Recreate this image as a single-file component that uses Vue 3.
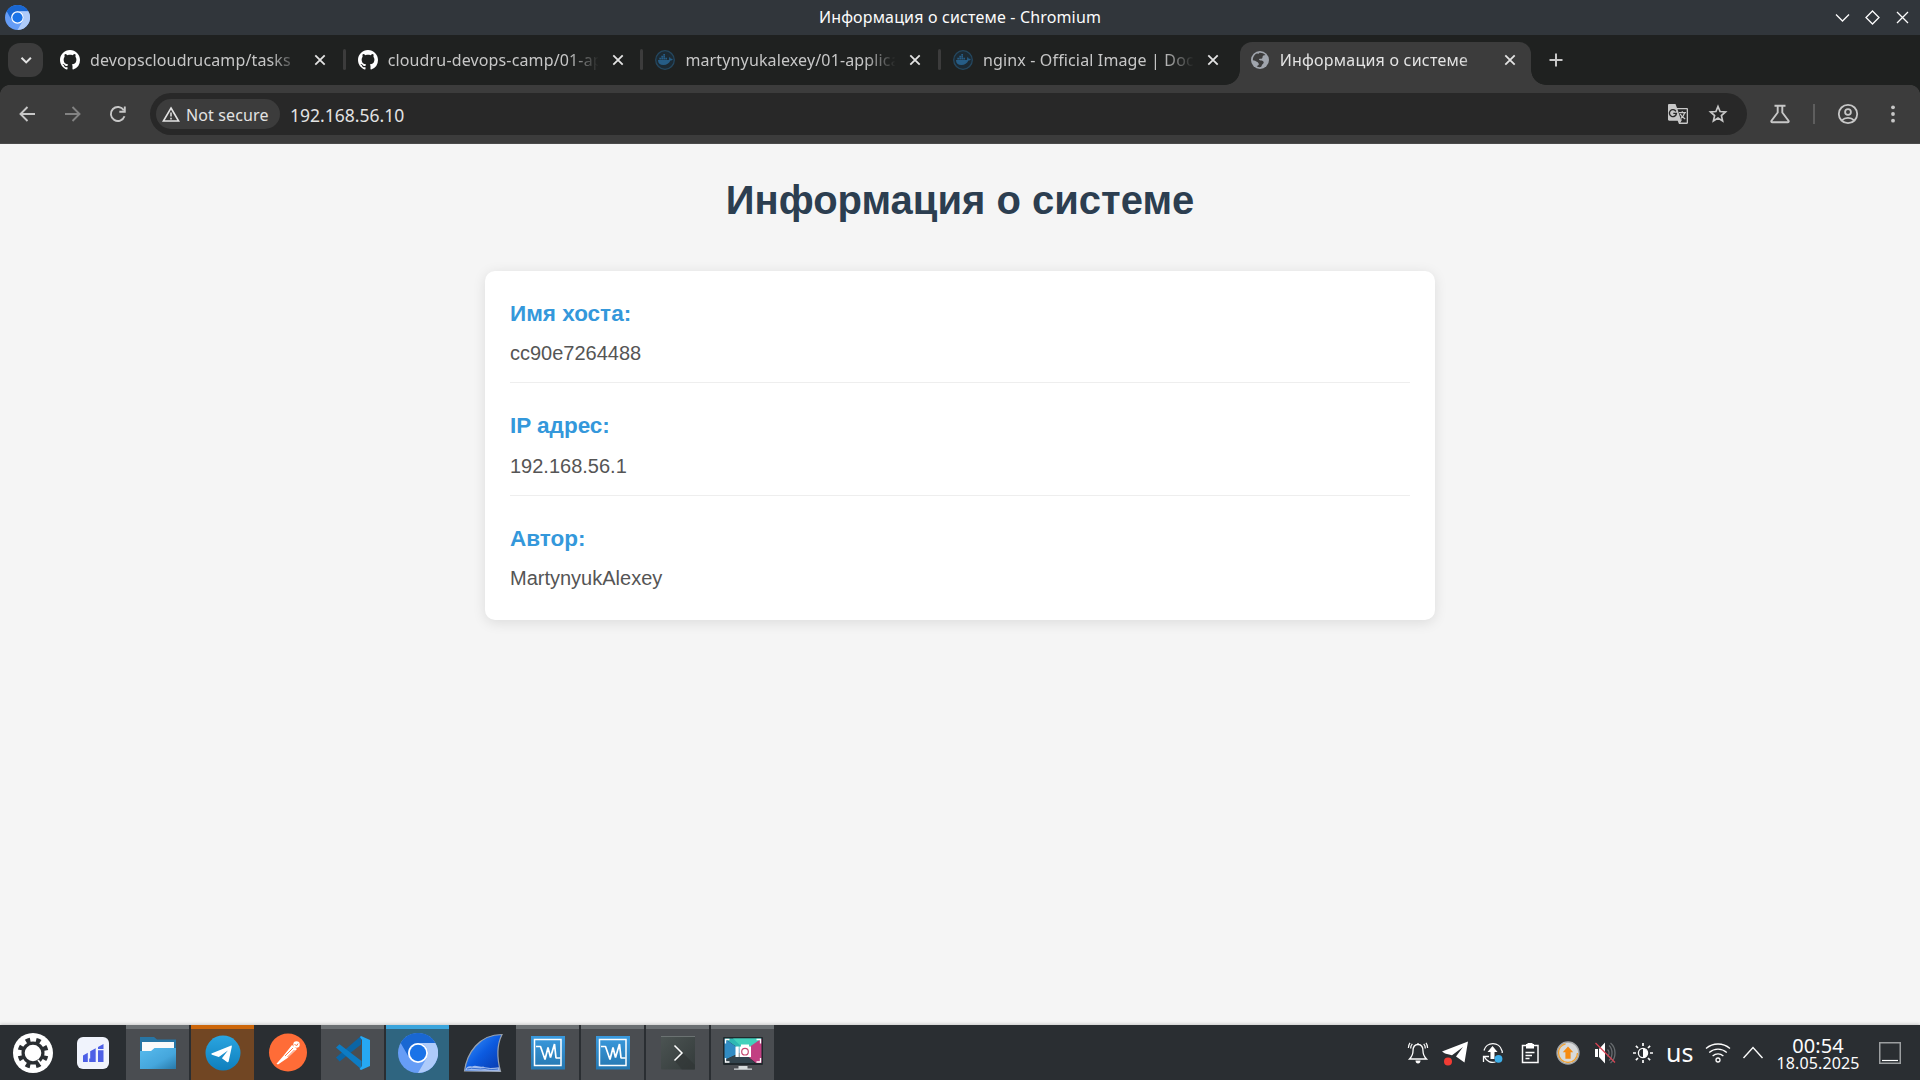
<script setup>
const tabs = [
  { title: 'devopscloudrucamp/tasks', icon: 'github' },
  { title: 'cloudru-devops-camp/01-ap', icon: 'github' },
  { title: 'martynyukalexey/01-applica', icon: 'docker' },
  { title: 'nginx - Official Image | Doc', icon: 'docker' },
  { title: 'Информация о системе', icon: 'globe', active: true },
]

const info = [
  { label: 'Имя хоста:', value: 'cc90e7264488' },
  { label: 'IP адрес:', value: '192.168.56.1' },
  { label: 'Автор:', value: 'MartynyukAlexey' },
]

const tasks = [
  { icon: 'folder', state: 'open' },
  { icon: 'telegram', state: 'attention' },
  { icon: 'postman', state: 'pinned' },
  { icon: 'code', state: 'open' },
  { icon: 'chromium', state: 'current' },
  { icon: 'shark', state: 'pinned' },
  { icon: 'machine', state: 'open' },
  { icon: 'machine', state: 'open' },
  { icon: 'terminal', state: 'open' },
  { icon: 'capture', state: 'open' },
]
</script>

<template>
  <div class="desktop">
    <svg class="defs" width="0" height="0">
      <defs>
        <symbol id="chromium" viewBox="0 0 48 48">
          <circle cx="24" cy="24" r="24" fill="#669df6" />
          <path fill="#1967d2" d="M24 12H44.8A24 24 0 0 0 3.2 12L13.6 30A12 12 0 0 1 24 12z" />
          <path fill="#aecbfa" d="M34.4 30L24 48A24 24 0 0 0 44.8 12H24A12 12 0 0 1 34.4 30z" />
          <circle cx="24" cy="24" r="12" fill="#fff" />
          <circle cx="24" cy="24" r="9.8" fill="#1a73e8" />
        </symbol>
        <linearGradient id="gFolder" x1="0" y1="0" x2="1" y2="1">
          <stop offset="0" stop-color="#57bbee" /><stop offset=".6" stop-color="#45a6dc" /><stop offset="1" stop-color="#2878a8" />
        </linearGradient>
        <linearGradient id="gTelegram" x1="0" y1="0" x2="0" y2="1">
          <stop offset="0" stop-color="#2aa5e0" /><stop offset="1" stop-color="#0f7fbd" />
        </linearGradient>
        <linearGradient id="gShark" x1="0" y1="0" x2="1" y2="1">
          <stop offset="0" stop-color="#3f9bff" /><stop offset=".5" stop-color="#0c5be0" /><stop offset="1" stop-color="#0836a8" />
        </linearGradient>
        <linearGradient id="gTerm" x1="0" y1="0" x2="1" y2="1">
          <stop offset="0" stop-color="#4c5453" /><stop offset="1" stop-color="#343b3b" />
        </linearGradient>
        <linearGradient id="gBox" x1="0" y1="0" x2="0" y2="1">
          <stop offset="0" stop-color="#3a9ade" /><stop offset="1" stop-color="#2577b0" />
        </linearGradient>
      </defs>
    </svg>

    <header class="titlebar">
      <svg class="app-icon" width="25" height="25"><use href="#chromium" /></svg>
      <span class="window-title">Информация о системе - Chromium</span>
      <div class="window-buttons">
        <svg width="30" height="35"><path d="M9 14.5l6.5 6.5 6.5-6.5" /></svg>
        <svg width="30" height="35"><path d="M15.5 11l6.5 6.5-6.5 6.5L9 17.500z" /></svg>
        <svg width="30" height="35"><path d="M10 12l11 11M21 12L10 23" /></svg>
      </div>
    </header>

    <nav class="tabstrip">
      <button class="tab-search">
        <svg width="14" height="14" viewBox="0 0 14 14"><path d="M2.500 4.700l4.700 4.700 4.700-4.700" /></svg>
      </button>
      <div v-for="(tab, i) in tabs" :key="i" class="tab" :class="{ active: tab.active }">
        <svg v-if="tab.icon === 'github'" class="favicon" viewBox="0 0 16 16">
          <path fill="#fff" d="M8 0C3.58 0 0 3.58 0 8c0 3.54 2.29 6.53 5.47 7.59.4.07.55-.17.55-.38 0-.19-.01-.82-.01-1.490-2.010.370-2.530-.490-2.690-.940-.090-.230-.480-.940-.820-1.130-.280-.150-.680-.520-.010-.530.630-.010 1.080.580 1.230.820.720 1.210 1.870.870 2.330.660.070-.520.280-.870.510-1.070-1.780-.200-3.640-.890-3.640-3.950 0-.870.310-1.590.820-2.150-.080-.200-.360-1.020.080-2.120 0 0 .670-.210 2.200.820.640-.180 1.320-.270 2-.270s1.360.090 2 .270c1.530-1.040 2.200-.820 2.200-.820.440 1.100.160 1.920.080 2.120.510.560.820 1.270.820 2.150 0 3.070-1.870 3.750-3.650 3.950.290.250.540.730.540 1.480 0 1.070-.010 1.930-.010 2.200 0 .210.150.460.550.380A8.010 8.010 0 0 0 16 8c0-4.420-3.580-8-8-8z" />
        </svg>
        <svg v-else-if="tab.icon === 'docker'" class="favicon" viewBox="0 0 20 20">
          <circle cx="10" cy="10" r="9.300" fill="#1c2a33" stroke="#24475f" stroke-width="1.300" />
          <path fill="#265d86" d="M3 10h10.700c.7-.6.500-1.600.200-2.200l.9-.600c.6.400 1 1 1 1.700.6-.1 1.300 0 1.900.300-.4 1-1.300 1.400-2.300 1.400C14 13.600 11.800 15 8.500 15 4.800 15 3 13.300 3 10zM4.300 7.800h1.700v1.700H4.300zM6.300 7.800H8v1.700H6.300zM8.300 7.800H10v1.700H8.300zM10.300 7.800H12v1.700h-1.700zM6.300 5.800H8v1.700H6.300zM8.300 5.800H10v1.700H8.300zM8.300 3.900H10v1.600H8.300z" />
        </svg>
        <svg v-else class="favicon" viewBox="0 0 20 20">
          <circle cx="10" cy="10" r="9" fill="#a0a5ad" />
          <path fill="#3c3c3c" d="M9.300 2.700c1.800-.3 4.600.4 6.100 2.400-.7.300-1.900.3-2.500.900-.8.800.1 2-1 2.500-1 .4-2-.2-2.700.6-.6.700.500 1.300 1.500 1.300 1.600 0 2.800.600 3 1.900.1 1.200-1.100 1.700-1.700 2.600-.4.700-.5 1.900-1.400 2.200-1.500.2-2.900-.2-3.900-.9.900-.3 1.900-.7 2.100-1.600.2-1-.6-1.800-1.400-2.500C6 10.900 4.300 10.500 2.800 10.200 2.600 7 4.500 4.200 7.200 3.200 7.600 4.300 9 4 9.300 2.700z" />
        </svg>
        <span class="tab-title">{{ tab.title }}</span>
        <svg class="tab-close" width="20" height="20"><path d="M5.300 5.300l9.400 9.400M14.700 5.300l-9.400 9.400" /></svg>
      </div>
      <svg class="new-tab" width="20" height="20"><path d="M10 3.500v13M3.500 10h13" /></svg>
    </nav>

    <div class="toolbar">
      <svg class="nav-icon back" viewBox="0 0 20 20"><path d="M17 10H3M9.500 3l-7 7 7 7" /></svg>
      <svg class="nav-icon forward" viewBox="0 0 20 20"><path d="M2 10h14M9.500 3l7 7-7 7" /></svg>
      <svg class="nav-icon reload" viewBox="0 0 20 20"><path d="M16.500 12.200A7 7 0 1 1 15.800 6.200M16.800 2.400V7.700H11.300" /></svg>
      <div class="omnibox">
        <div class="chip">
          <svg width="18" height="17" viewBox="0 0 18 17"><path d="M9 2L16.600 15H1.400z" fill="none" stroke="#e3e3e3" stroke-width="1.600" /><path d="M9 6.500v4M9 11.800v1.700" stroke="#e3e3e3" stroke-width="1.500" /></svg>
          <span>Not secure</span>
        </div>
        <span class="url">192.168.56.10</span>
        <svg class="translate" width="22" height="22" viewBox="0 0 22 22">
          <path fill="#c7c7c7" d="M2.200 1h6.300l1.500 4h9.800c.7 0 1.200.5 1.200 1.200v13.600c0 .7-.5 1.200-1.200 1.200H12l-1.300-3.200H2.200C1.500 17.800 1 17.300 1 16.600V2.200C1 1.500 1.500 1 2.200 1z" />
          <path fill="#282828" d="M10.500 6.300h9.200v13.300H13l1.200-1.900z" />
          <path fill="none" stroke="#282828" stroke-width="1.400" d="M8.900 8.300A3.500 3.500 0 1 0 9.400 10.400H6.300" />
          <path fill="none" stroke="#c7c7c7" stroke-width="1.300" d="M12 9.700h7M15.300 8.200v1.500M17.700 9.700c-.5 2.300-2 4.500-4 5.800M13.200 11c1 2 2.800 3.600 5 5M11.500 17.200l2.500 0-1.700 2.800" />
        </svg>
        <svg class="star" width="20" height="20" viewBox="0 0 20 20"><path d="M10 2.500l2.100 5 5.400.5-4.100 3.600 1.200 5.300-4.600-2.800-4.600 2.800 1.200-5.300L2.500 8l5.400-.5z" /></svg>
      </div>
      <svg class="flask" width="22" height="22" viewBox="0 0 22 22"><path d="M5.500 2.800h11M8.700 3v6.500L2.500 17.800c-.5.900-.1 1.500.8 1.500h15.400c.9 0 1.300-.6.800-1.500L13.300 9.500V3" /></svg>
      <span class="divider"></span>
      <svg class="profile" width="22" height="22" viewBox="0 0 22 22"><circle cx="11" cy="11" r="9.200" /><circle cx="11" cy="9" r="2.900" /><path d="M4.800 17.300c3.400-3.200 9-3.200 12.400 0" /></svg>
      <svg class="menu" width="6" height="22" viewBox="0 0 6 22"><circle cx="3" cy="4.300" r="1.900" /><circle cx="3" cy="11" r="1.900" /><circle cx="3" cy="17.700" r="1.900" /></svg>
    </div>

    <main class="page">
      <h1>Информация о системе</h1>
      <section class="card">
        <div v-for="item in info" :key="item.label" class="row">
          <div class="label">{{ item.label }}</div>
          <div class="value">{{ item.value }}</div>
        </div>
      </section>
    </main>

    <footer class="panel">
      <svg class="launcher" width="40" height="40" viewBox="0 0 40 40">
        <circle cx="20" cy="20" r="20" fill="#fff" />
        <circle cx="20" cy="20" r="9.900" fill="none" stroke="#2a2e32" stroke-width="3.200" />
        <circle cx="20" cy="20" r="13" fill="none" stroke="#2a2e32" stroke-width="5" stroke-dasharray="4.400 5.810" transform="rotate(12 20 20)" />
        <path d="M25 27l3.600 4.500" stroke="#fff" stroke-width="1.800" />
      </svg>
      <svg class="stats" width="32" height="32" viewBox="0 0 32 32">
        <rect width="32" height="32" rx="6" fill="#f0f3fc" />
        <path fill="#4d5fe6" d="M6 18.500l4.800-2.800V25H6zM12.200 21.500h1v-7.300l5.500-3V25h-6.500zM21 10l5.500-3v5H21zM21 13.200h5.500V25H21z" />
      </svg>

      <div class="tasks">
        <div v-for="(task, i) in tasks" :key="i" class="task" :class="task.state">
          <svg width="63" height="55" viewBox="0 0 63 55">
            <template v-if="task.icon === 'folder'">
              <path fill="#2775a4" d="M14 12h14l3 2.500h19V31H14z" />
              <path fill="#fafafa" d="M16 17h32v12H16z" />
              <path fill="url(#gFolder)" d="M14 26h11l3.500-3H50v21H14z" />
            </template>
            <template v-else-if="task.icon === 'telegram'">
              <circle cx="32" cy="28" r="17.500" fill="url(#gTelegram)" />
              <path fill="#fff" d="M21 28.300L39.700 20.700c.8-.3 1.300.2 1.100 1L37.700 36.300c-.2.900-.9 1.100-1.700.6l-5.100-3.700 6-7.600-9.100 6.300-6.800-2.200c-.9-.3-.9-1.100 0-1.400z" />
            </template>
            <template v-else-if="task.icon === 'postman'">
              <circle cx="32" cy="27.500" r="19" fill="#ff6c37" />
              <path fill="#fff" d="M36 20l5 4-9.500 9-9.500 6.500-1.500-.8 7-8z" />
              <circle cx="40.500" cy="19.500" r="3.200" fill="#fff" />
              <path fill="none" stroke="#ff6c37" stroke-width=".9" d="M29 31l8-8M31.500 32l7-7M38.500 19.500l2.500 1 1-2" />
            </template>
            <template v-else-if="task.icon === 'code'">
              <path fill="#0b65a5" d="M15 32.500L40 11v8.500L18.600 36.500z" />
              <path fill="#0d7cc4" d="M15 22.500l3.500-3.300L40.500 36v8.500z" />
              <path fill="#26a8f2" d="M40 11l9 4v26l-9 4-1.500-1L41 41V15l-2-3z" />
            </template>
            <use v-else-if="task.icon === 'chromium'" href="#chromium" x="12" y="8" width="40" height="40" />
            <template v-else-if="task.icon === 'shark'">
              <path fill="url(#gShark)" stroke="#9aa2ad" stroke-width="1.200" d="M13.500 46C16 28 28 9.500 51 9.500c-5 10-5 24-1.500 37z" />
              <path fill="#b8cdf2" d="M14 45.500c1-4 4-5 7-4 4-2 7 1 11 0 6 2.500 11 1 16 .7l1 4z" opacity=".85" />
              <path fill="none" stroke="#3b6fce" d="M16 44c6-2 12 1 18-.5 5 1.500 9 1 13 .5" />
            </template>
            <template v-else-if="task.icon === 'machine'">
              <rect x="15" y="11" width="34" height="33.500" fill="url(#gBox)" />
              <rect x="18.500" y="14.500" width="26.500" height="26" fill="none" stroke="#fff" stroke-width="1.500" />
              <path fill="none" stroke="#fff" stroke-width="1.700" stroke-linejoin="bevel" d="M20 21.500h4.500L29 34.500 32 22.500l2.500 10L38.500 19l1.500 14h4.500" />
            </template>
            <template v-else-if="task.icon === 'terminal'">
              <rect x="15" y="11" width="34" height="33.500" rx="1" fill="url(#gTerm)" />
              <path fill="#303636" opacity=".6" d="M37 28l12 12v4.500H36L29 36z" />
              <path stroke="#6b7272" d="M15 11.500h34" />
              <path fill="none" stroke="#fff" stroke-width="1.500" d="M28.500 20.500l7.500 7.500-7.500 7.500" />
            </template>
            <template v-else>
              <rect x="12" y="12" width="40" height="28" rx="1" fill="#20282c" />
              <path fill="#2fb8b4" d="M13.500 13.500h37L32 26.500z" />
              <path fill="#318cc4" d="M13.500 13.500L32 26.500 13.500 35z" />
              <path fill="#33444d" d="M13.500 35L32 26.500 44 38H13.500z" />
              <path fill="#c23f82" d="M50.500 13.500V38H45L30 26z" />
              <path fill="#42d1bb" d="M22 13.500h28.500L34 25z" />
              <path fill="none" stroke="#fff" stroke-width="1.300" d="M14.500 18.500v-4h4M45.500 14.500h4v4M49.500 33v4h-4M18.500 37h-4v-4" />
              <path fill="#fff" d="M24.500 21.500h3.300V32h-3.300zM28.500 21.500H30v-2h8v2h2V32H28.500z" />
              <circle cx="34" cy="26.700" r="3.300" fill="#fff" stroke="#c64a72" stroke-width="1.200" />
              <path fill="#d6dadb" d="M27.500 41h9v2.500h4.500v1.300H23v-1.300h4.500z" />
            </template>
          </svg>
        </div>
      </div>

      <div class="tray">
        <svg class="tray-icon" viewBox="0 0 24 24">
          <path d="M12 3.500c-4 0-5 3-5 6.500 0 4-1.500 6-3.500 8h17c-2-2-3.500-4-3.500-8 0-3.500-1-6.500-5-6.500zM12 2v2" /><path fill="#fcfcfc" stroke="none" d="M9.500 19.500h5c0 2-1 3-2.500 3s-2.500-1-2.500-3z" />
          <path d="M6.300 2.800C5 4.200 4.700 5.500 4.700 7.500M4 1.800C2.700 3.500 2.400 5 2.400 7M17.700 2.800c1.300 1.400 1.600 2.700 1.600 4.700M20 1.800c1.300 1.700 1.600 3.200 1.600 5.200" stroke-width="1.200" />
        </svg>
        <svg class="tray-icon" viewBox="0 0 24 24"><path fill="#fff" stroke="none" d="M-2 10.500L24 .4 20.500 21.500 12 15.500l7-9.500-11 8.200-7-1.800z" /><circle cx="4" cy="20.500" r="4" fill="#f23c34" stroke="none" /></svg>
        <svg class="tray-icon" viewBox="0 0 24 24"><path d="M3 9.500A9.200 9.200 0 0 1 20.800 9.500M21.200 12v-2.500M14.500 21A9.200 9.200 0 0 1 3.500 16M2.500 21v-5.500H8" /><path fill="#fff" stroke="none" d="M11.500 5l5 6h-3v7h-4v-7h-3z" /><circle cx="17.500" cy="17.800" r="3.900" fill="#3daee9" stroke="none" /></svg>
        <svg class="tray-icon" viewBox="0 0 24 24"><path d="M3.500 4.500H19v17H3.500z" stroke-width="1.500" /><path fill="#fff" stroke="none" d="M7 3h1.500V2h5v1H15v4.500H7z" /><path d="M6.500 11.500h9M6.500 14.500h6.500M6.500 17.500h4" /></svg>
        <svg class="tray-icon" viewBox="0 0 24 24"><circle cx="12" cy="12" r="11" fill="#d8dadb" stroke="#a3a6a8" /><circle cx="12" cy="12" r="9.500" stroke="#f0a030" stroke-width="1.300" stroke-dasharray="42 18" /><path fill="#f68b12" stroke="none" d="M12 5.500l5.200 5.800h-2.600v6.500H9.400v-6.500H6.800z" /></svg>
        <svg class="tray-icon" viewBox="0 0 24 24"><path fill="#fff" stroke="none" d="M1 8h3v8H1zM5 8l6-6.500v21L5 16z" /><path d="M13.500 8.500c2 2 2 5 0 7M15 4.500c4 3.500 4 11.500 0 15M16.500 2c6 5 6 15 0 20" stroke="#686c6f" stroke-width="1.300" /><path d="M1.500 2L21 21.500" stroke="#da4453" stroke-width="1.300" /></svg>
        <svg class="tray-icon" viewBox="0 0 24 24"><circle cx="12" cy="12" r="4.600" stroke-width="1.300" /><path fill="#fff" stroke="none" d="M12 7.400a4.600 4.600 0 0 1 0 9.200z" /><path stroke-width="1.700" d="M12 2v3M12 19v3M2 12h3M19 12h3M4.900 4.900L7 7M17 17l2.100 2.100M19.100 4.900L17 7M7 17l-2.100 2.100" /></svg>
        <span class="layout">us</span>
        <svg class="tray-icon wifi" viewBox="0 0 24 24"><path d="M0 7.500c7-6 17-6 24 0M3.200 11.500c5.200-4.500 12.400-4.500 17.600 0M6.600 15c3.200-2.700 7.600-2.700 10.800 0" /><circle cx="12" cy="19" r="2" /></svg>
        <svg class="caret" width="32" height="24" viewBox="0 0 32 24"><path d="M6.500 17L16 6.500 25.500 17" /></svg>
        <div class="clock">
          <span class="time">00:54</span>
          <span class="date">18.05.2025</span>
        </div>
        <svg class="peek" width="22" height="22" viewBox="0 0 22 22"><rect x=".75" y=".75" width="20.500" height="20.500" fill="none" stroke="#9b9ea0" stroke-width="1.500" /><path d="M3 18.500h16" stroke="#fff" stroke-width="1.200" /></svg>
      </div>
    </footer>
  </div>
</template>

<style>
body {
  margin: 0;
  overflow: hidden;
}
</style>

<style scoped>
.desktop {
  width: 1920px;
  height: 1080px;
  display: flex;
  flex-direction: column;
  font-family: "Noto Sans", sans-serif;
  overflow: hidden;
}
svg { display: block; flex: none; }
.defs { position: absolute; }

.titlebar {
  height: 35px;
  flex: none;
  display: grid;
  grid-template-columns: 100px 1fr 100px;
  align-items: center;
  background: #31363b;
  color: #fcfcfc;
}
.app-icon { margin-left: 5px; }
.window-title { text-align: center; font-size: 16px; letter-spacing: .16px; line-height: 35px; }
.window-buttons { display: flex; justify-content: flex-end; padding-right: 3px; }
.window-buttons path { fill: none; stroke: #fcfcfc; stroke-width: 1.3; }

.tabstrip {
  height: 50px;
  flex: none;
  box-sizing: border-box;
  display: flex;
  align-items: center;
  padding-left: 8px;
  background: #1f2120;
}
.tab-search {
  width: 35px;
  height: 34px;
  margin: 0 7px 0 0;
  padding: 0;
  border: 0;
  border-radius: 12px;
  display: flex;
  align-items: center;
  justify-content: center;
  background: #3c3c3c;
}
.tab-search path { fill: none; stroke: #e3e3e3; stroke-width: 2; }
.tab {
  position: relative;
  width: 297.7px;
  height: 50px;
  flex: none;
  box-sizing: border-box;
  display: flex;
  align-items: center;
  padding: 0 17px 0 10px;
  color: #c7c7c7;
}
.tab:not(.active)::after {
  content: "";
  position: absolute;
  right: 2px;
  top: 14px;
  width: 3px;
  height: 21px;
  border-radius: 2px;
  background: #3c3c3c;
}
.tab:nth-last-of-type(2):not(.active)::after { display: none; }
.tab.active {
  width: 291px;
  height: 43px;
  align-self: flex-end;
  margin-left: -1px;
  padding: 0 11px 7px 10px;
  border-radius: 12px 12px 0 0;
  background: #3c3c3c;
  color: #e3e3e3;
}
.tab.active::before,
.tab.active::after {
  content: "";
  position: absolute;
  bottom: 0;
  width: 15px;
  height: 15px;
}
.tab.active::before { left: -15px; background: radial-gradient(circle at 0 0, #1f2120 14.5px, #3c3c3c 15.2px); }
.tab.active::after { right: -15px; background: radial-gradient(circle at 100% 0, #1f2120 14.5px, #3c3c3c 15.2px); }
.favicon { width: 20px; height: 20px; margin-right: 10px; }
.tab-title {
  width: 210px;
  margin-right: 10px;
  white-space: nowrap;
  font-size: 16px;
  letter-spacing: .14px;
  line-height: 24px;
  -webkit-mask-image: linear-gradient(90deg, #000 180px, transparent 211px);
  mask-image: linear-gradient(90deg, #000 180px, transparent 211px);
}
.tab.active .tab-title { letter-spacing: .22px; }
.tab-close path { fill: none; stroke: #e3e3e3; stroke-width: 1.8; }
.new-tab { margin-left: 15px; }
.new-tab path { stroke: #c7c7c7; stroke-width: 2; }

.toolbar {
  height: 59px;
  flex: none;
  box-sizing: border-box;
  display: flex;
  align-items: center;
  padding-left: 18px;
  border-bottom: 1px solid #4a4a4a;
  background: radial-gradient(circle at 10px 10px, #3c3c3c 9.7px, #1f2120 10.3px) 0 0 / 10px 10px no-repeat,
    radial-gradient(circle at 0 10px, #3c3c3c 9.7px, #1f2120 10.3px) 100% 0 / 10px 10px no-repeat, #3c3c3c;
}
.nav-icon { width: 20px; height: 20px; margin-right: 24.500px; }
.nav-icon path { fill: none; stroke: #c7c7c7; stroke-width: 1.9; }
.forward { opacity: .5; margin-right: 25.500px; }
.reload { margin-right: 22px; }
.omnibox {
  width: 1597px;
  height: 42px;
  box-sizing: border-box;
  display: flex;
  align-items: center;
  padding: 0 19px 0 6px;
  border-radius: 21px;
  background: #282828;
  color: #e3e3e3;
}
.chip {
  width: 124px;
  height: 30px;
  box-sizing: border-box;
  display: flex;
  align-items: center;
  gap: 6px;
  padding-left: 6px;
  border-radius: 15px;
  background: #3c3c3c;
  font-size: 16px;
  letter-spacing: .12px;
  white-space: nowrap;
}
.chip span { padding-top: 2px; }
.url { margin-left: 10px; flex: 1; font-size: 17.5px; padding-top: 1px; }
.star { margin-left: 19px; }
.star path { fill: none; stroke: #c7c7c7; stroke-width: 1.7; }
.flask { margin-left: 22px; }
.flask path { fill: none; stroke: #c7c7c7; stroke-width: 1.9; }
.divider { width: 2px; height: 20px; margin: 0 21.500px 0 22px; background: #5e5e5e; }
.profile circle, .profile path { fill: none; stroke: #c7c7c7; stroke-width: 1.8; }
.menu { margin-left: 31px; }
.menu circle { fill: #c7c7c7; }

.page {
  flex: 1;
  box-sizing: border-box;
  padding: 24px 0;
  background: #f5f5f5;
  font-family: "Liberation Sans", Arial, sans-serif;
  line-height: 1.6;
}
h1 {
  margin: 0 0 38.5px;
  text-align: center;
  font-size: 40px;
  font-weight: 700;
  color: #2c3e50;
}
.card {
  width: 950px;
  box-sizing: border-box;
  margin: 0 auto;
  padding: 25px;
  border-radius: 10px;
  background: #fff;
  box-shadow: 0 2.5px 12.5px rgba(0, 0, 0, .1);
}
.row { margin-bottom: 25px; padding-bottom: 13.5px; border-bottom: 1px solid #eee; }
.row:last-child { margin-bottom: 0; padding-bottom: 1px; border-bottom: 0; }
.label { margin-bottom: 5.25px; font-size: 22.5px; font-weight: 700; line-height: 36px; color: #3498db; }
.value { font-size: 20px; line-height: 32px; color: #555; }

.panel {
  position: relative;
  height: 55px;
  flex: none;
  display: flex;
  align-items: center;
  background: #2a2e32;
  box-shadow: 0 -1px 3px rgba(0, 0, 0, .18);
}
.launcher { margin: 1px 0 0 13px; }
.stats { margin: 1px 17px 0 24px; }
.tasks { display: flex; gap: 2px; }
.task { width: 63px; height: 55px; box-shadow: inset 0 4px 0 transparent; }
.open { background: #4a4d51; box-shadow: inset 0 4px 0 #6b7073; }
.attention { background: #714623; box-shadow: inset 0 4px 0 #cc660a; }
.current { background: #2f6580; box-shadow: inset 0 4px 0 #3ba5dc; }
.tray { margin-left: auto; display: flex; align-items: center; }
.tray-icon { width: 24px; height: 24px; margin: 0 6.75px; overflow: visible; }
.tray-icon path, .tray-icon circle { stroke-linecap: butt; }
.tray-icon { fill: none; stroke: #fcfcfc; stroke-width: 1.3; }
.layout { width: 37.5px; margin-left: -1px; margin-right: 1px; text-align: center; font-size: 25px; line-height: 55px; color: #fcfcfc; }
.caret path { fill: none; stroke: #fcfcfc; stroke-width: 1.4; }
.clock {
  width: 98px;
  display: flex;
  flex-direction: column;
  align-items: center;
  padding-top: 2px;
  color: #fcfcfc;
}
.time { font-size: 20px; line-height: 19px; letter-spacing: .1px; }
.date { font-size: 16px; line-height: 17px; letter-spacing: .12px; }
.peek { margin: 0 19px 0 12px; }
</style>
